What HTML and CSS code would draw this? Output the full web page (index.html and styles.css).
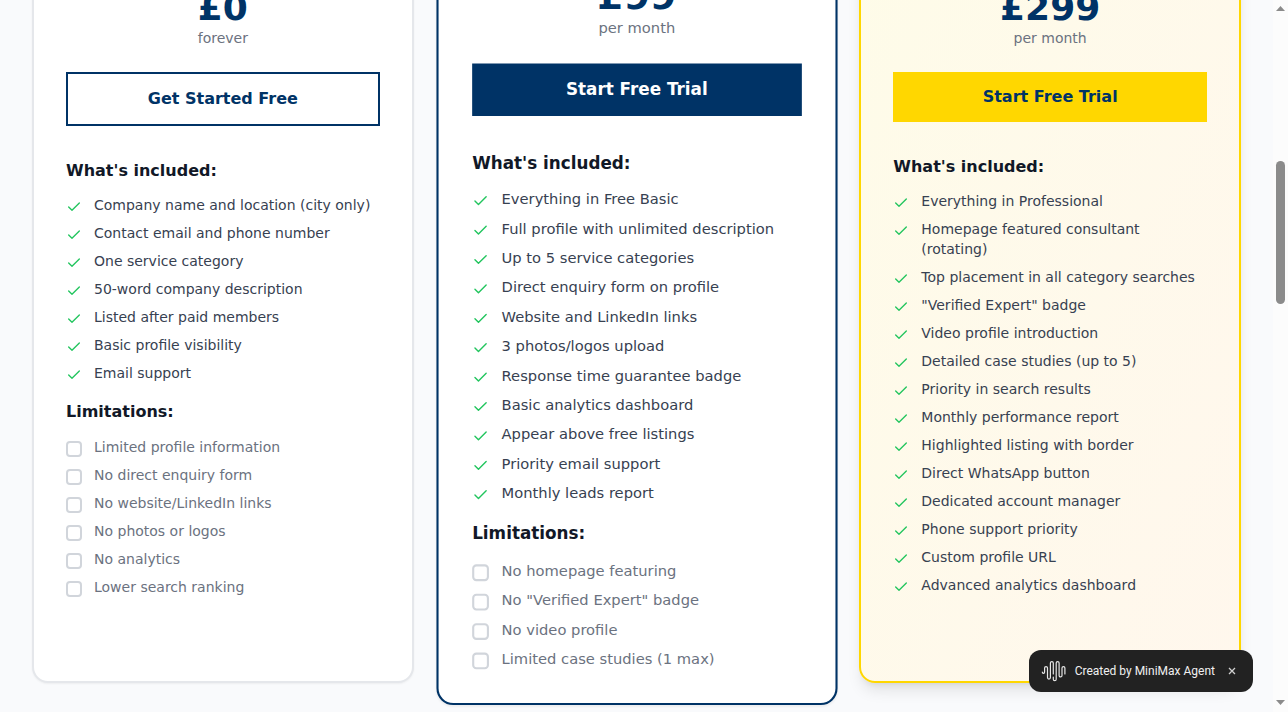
FILE: index.html
```html
<!DOCTYPE html>
<html lang="en">
<head>
<meta charset="utf-8">
<title>Membership plans</title>
<link rel="stylesheet" href="styles.css">
</head>
<body>
<svg class="sprite" aria-hidden="true">
  <symbol id="check" viewBox="0 0 24 24"><path d="M20 6 9 17l-5-5" fill="none" stroke="currentColor" stroke-width="2" stroke-linecap="round" stroke-linejoin="round"/></symbol>
</svg>
<div class="window">
  <main class="page">
    <div class="plans">
      <section class="card">
        <header class="card-header">
          <div class="price">£0</div>
          <div class="period">forever</div>
        </header>
        <button class="cta cta-outline" type="button">Get Started Free</button>
        <h3 class="list-title">What's included:</h3>
        <ul class="list">
          <li class="item"><svg class="check"><use href="#check"/></svg><span>Company name and location (city only)</span></li>
          <li class="item"><svg class="check"><use href="#check"/></svg><span>Contact email and phone number</span></li>
          <li class="item"><svg class="check"><use href="#check"/></svg><span>One service category</span></li>
          <li class="item"><svg class="check"><use href="#check"/></svg><span>50-word company description</span></li>
          <li class="item"><svg class="check"><use href="#check"/></svg><span>Listed after paid members</span></li>
          <li class="item"><svg class="check"><use href="#check"/></svg><span>Basic profile visibility</span></li>
          <li class="item"><svg class="check"><use href="#check"/></svg><span>Email support</span></li>
        </ul>
        <h3 class="list-title limits-title">Limitations:</h3>
        <ul class="list">
          <li><label class="item limit"><input class="box" type="checkbox"><span>Limited profile information</span></label></li>
          <li><label class="item limit"><input class="box" type="checkbox"><span>No direct enquiry form</span></label></li>
          <li><label class="item limit"><input class="box" type="checkbox"><span>No website/LinkedIn links</span></label></li>
          <li><label class="item limit"><input class="box" type="checkbox"><span>No photos or logos</span></label></li>
          <li><label class="item limit"><input class="box" type="checkbox"><span>No analytics</span></label></li>
          <li><label class="item limit"><input class="box" type="checkbox"><span>Lower search ranking</span></label></li>
        </ul>
      </section>

      <section class="card card-popular">
        <header class="card-header">
          <div class="price">£99</div>
          <div class="period">per month</div>
        </header>
        <button class="cta cta-navy" type="button">Start Free Trial</button>
        <h3 class="list-title">What's included:</h3>
        <ul class="list">
          <li class="item"><svg class="check"><use href="#check"/></svg><span>Everything in Free Basic</span></li>
          <li class="item"><svg class="check"><use href="#check"/></svg><span>Full profile with unlimited description</span></li>
          <li class="item"><svg class="check"><use href="#check"/></svg><span>Up to 5 service categories</span></li>
          <li class="item"><svg class="check"><use href="#check"/></svg><span>Direct enquiry form on profile</span></li>
          <li class="item"><svg class="check"><use href="#check"/></svg><span>Website and LinkedIn links</span></li>
          <li class="item"><svg class="check"><use href="#check"/></svg><span>3 photos/logos upload</span></li>
          <li class="item"><svg class="check"><use href="#check"/></svg><span>Response time guarantee badge</span></li>
          <li class="item"><svg class="check"><use href="#check"/></svg><span>Basic analytics dashboard</span></li>
          <li class="item"><svg class="check"><use href="#check"/></svg><span>Appear above free listings</span></li>
          <li class="item"><svg class="check"><use href="#check"/></svg><span>Priority email support</span></li>
          <li class="item"><svg class="check"><use href="#check"/></svg><span>Monthly leads report</span></li>
        </ul>
        <h3 class="list-title limits-title">Limitations:</h3>
        <ul class="list">
          <li><label class="item limit"><input class="box" type="checkbox"><span>No homepage featuring</span></label></li>
          <li><label class="item limit"><input class="box" type="checkbox"><span>No "Verified Expert" badge</span></label></li>
          <li><label class="item limit"><input class="box" type="checkbox"><span>No video profile</span></label></li>
          <li><label class="item limit"><input class="box" type="checkbox"><span>Limited case studies (1 max)</span></label></li>
        </ul>
      </section>

      <section class="card card-gold">
        <header class="card-header">
          <div class="price">£299</div>
          <div class="period">per month</div>
        </header>
        <button class="cta cta-gold" type="button">Start Free Trial</button>
        <h3 class="list-title">What's included:</h3>
        <ul class="list">
          <li class="item"><svg class="check"><use href="#check"/></svg><span>Everything in Professional</span></li>
          <li class="item"><svg class="check"><use href="#check"/></svg><span>Homepage featured consultant (rotating)</span></li>
          <li class="item"><svg class="check"><use href="#check"/></svg><span>Top placement in all category searches</span></li>
          <li class="item"><svg class="check"><use href="#check"/></svg><span>"Verified Expert" badge</span></li>
          <li class="item"><svg class="check"><use href="#check"/></svg><span>Video profile introduction</span></li>
          <li class="item"><svg class="check"><use href="#check"/></svg><span>Detailed case studies (up to 5)</span></li>
          <li class="item"><svg class="check"><use href="#check"/></svg><span>Priority in search results</span></li>
          <li class="item"><svg class="check"><use href="#check"/></svg><span>Monthly performance report</span></li>
          <li class="item"><svg class="check"><use href="#check"/></svg><span>Highlighted listing with border</span></li>
          <li class="item"><svg class="check"><use href="#check"/></svg><span>Direct WhatsApp button</span></li>
          <li class="item"><svg class="check"><use href="#check"/></svg><span>Dedicated account manager</span></li>
          <li class="item"><svg class="check"><use href="#check"/></svg><span>Phone support priority</span></li>
          <li class="item"><svg class="check"><use href="#check"/></svg><span>Custom profile URL</span></li>
          <li class="item"><svg class="check"><use href="#check"/></svg><span>Advanced analytics dashboard</span></li>
        </ul>
      </section>
    </div>
  </main>
  <div class="scrollbar" aria-hidden="true">
    <svg class="arrow" viewBox="0 0 15 15"><path d="M3 11 7.500 6 12 11z" fill="#8b8b8b"/></svg>
    <div class="track"><div class="thumb"></div></div>
    <svg class="arrow" viewBox="0 0 15 15"><path d="M3 3 7.500 8 12 3z" fill="#8b8b8b"/></svg>
  </div>
</div>
<aside class="agent">
  <svg class="agent-logo" viewBox="0 0 26 22" fill="none" stroke="#e6e6e6" stroke-width="1.200" stroke-linecap="round"><path d="M1.300 12c0 1.700 2.300 1.700 2.300 0V8a1.450 1.450 0 0 1 2.900 0v9.600a1.450 1.450 0 0 0 2.900 0V3a1.450 1.450 0 0 1 2.900 0v11M12.300 17v2.200a1.450 1.450 0 0 0 2.900 0V3a1.450 1.450 0 0 1 2.900 0v12.500a1.450 1.450 0 0 0 2.900 0V8a1.450 1.450 0 0 1 2.900 0v6"/></svg>
  <span>Created by MiniMax Agent</span>
  <button class="agent-close" type="button" aria-label="Close"><svg class="agent-x" viewBox="0 0 8 8"><path d="M1 1l6 6M7 1 1 7" stroke="#d0d0d0" stroke-width="1.300"/></svg></button>
</aside>
</body>
</html>
```
FILE: styles.css
```css
* { box-sizing: border-box; }

body {
  margin: 0;
  background: #f9fafb;
  font-family: "DejaVu Sans", sans-serif;
  font-size: 14px;
  line-height: 20px;
  color: #374151;
}

.sprite { display: none; }

.window {
  display: flex;
  height: 100vh;
  overflow: hidden;
}

.page {
  flex: 1;
  min-width: 0;
  overflow: hidden;
  background: #f9fafc;
}

.plans {
  display: grid;
  grid-template-columns: repeat(3, minmax(0, 1fr));
  gap: 32px;
  padding: 0 32px;
  margin-top: -199px;
}

.card {
  display: flex;
  flex-direction: column;
  padding: 32px;
  border: 2px solid #e5e7eb;
  border-radius: 16px;
  background: #fff;
  box-shadow: 0 1px 2px rgba(0, 0, 0, 0.05);
}

.card-popular {
  border-color: #003366;
  transform: scale(1.05);
}

.card-gold {
  border-color: #ffd700;
  background: linear-gradient(to bottom right, #fefce8, #fff7ed);
  box-shadow: 0 10px 15px -3px rgba(0, 0, 0, 0.1), 0 4px 6px -4px rgba(0, 0, 0, 0.1);
}

.card-header {
  padding-top: 153px;
  margin-bottom: 24px;
  text-align: center;
}

.price {
  font-size: 36px;
  line-height: 40px;
  font-weight: 700;
  color: #003366;
}

.period { color: #6b7280; }

.cta {
  padding: 13px 24px;
  border: 0;
  font: 700 16px/24px "DejaVu Sans", sans-serif;
  cursor: pointer;
}

.cta-outline {
  border: 2px solid #003366;
  background: #fff;
  color: #003366;
}

.cta-navy {
  background: #003366;
  color: #fff;
}

.cta-gold {
  background: #ffd700;
  color: #003366;
}

.list-title {
  margin: 33px 0 12px;
  font-size: 16px;
  line-height: 24px;
  font-weight: 700;
  color: #111827;
}

.limits-title { margin: 17px 0 13px; }

.list {
  display: flex;
  flex-direction: column;
  gap: 8px;
  margin: 0;
  padding: 0;
  list-style: none;
}

.item {
  display: flex;
  align-items: flex-start;
  gap: 12px;
}

.limit { color: #6b7280; }

.check,
.box {
  flex: none;
  width: 16px;
  height: 16px;
  margin: 4px 0 0;
}

.check { color: #22c55e; }

.box {
  appearance: none;
  border: 2px solid #d1d5db;
  border-radius: 4px;
}

.scrollbar {
  display: flex;
  flex-direction: column;
  flex: none;
  width: 15px;
  background: #fcfcfc;
}

.arrow {
  width: 15px;
  height: 15px;
}

.track {
  flex: 1;
  padding: 146px 3px 0;
}

.thumb {
  height: 143px;
  border-radius: 5px;
  background: #8b8b8b;
}

.agent {
  position: fixed;
  right: 35px;
  bottom: 20px;
  display: flex;
  align-items: center;
  gap: 8px;
  height: 42px;
  padding: 0 12px;
  border-radius: 12px;
  background: #222;
  color: #f0f0f0;
  font: 400 12px/18px Roboto, sans-serif;
}

.agent-logo {
  width: 26px;
  height: 22px;
}

.agent-close {
  display: flex;
  align-items: center;
  justify-content: center;
  width: 18px;
  height: 18px;
  padding: 0;
  border: 0;
  background: none;
  cursor: pointer;
}

.agent-x {
  width: 8px;
  height: 8px;
}
```
